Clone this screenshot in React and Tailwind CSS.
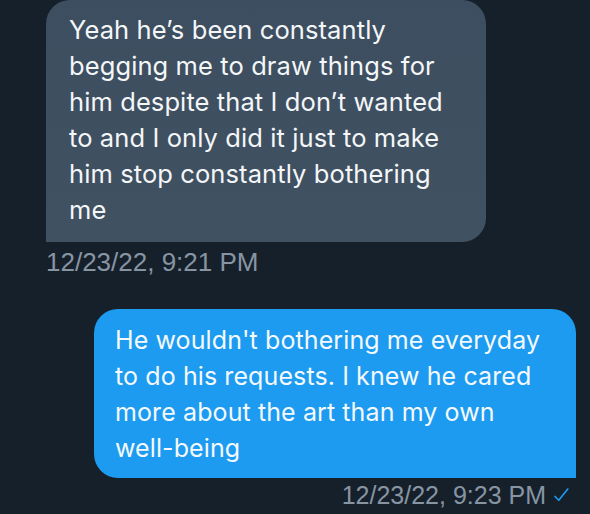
import React from 'react';

const bubbleFont = { fontFamily: 'Inter, "Open Sans", sans-serif' };

function Check() {
  return (
    <svg width="18" height="18" viewBox="0 0 24 24" fill="none" className="text-[#1d9bf0]">
      <path d="M4 14l5 5L21 4" stroke="currentColor" strokeWidth="2.2" strokeLinecap="round" strokeLinejoin="round" />
    </svg>
  );
}

export default function App() {
  return (
    <div className="w-[590px] h-[514px] overflow-hidden bg-[#16202b] flex flex-col">
      {/* incoming */}
      <div className="ml-[46px] w-[440px] rounded-[24px] rounded-bl-none bg-gradient-to-b from-[#3c4e5f] to-[#405162] pl-[23px] pt-[12px] pb-[14px] text-[25.5px] leading-[36px] tracking-[0.1px] text-[#f4f6f8] whitespace-nowrap" style={bubbleFont}>
        Yeah he’s been constantly<br />
        begging me to draw things for<br />
        him despite that I don’t wanted<br />
        to and I only did it just to make<br />
        him stop constantly bothering<br />
        me
      </div>
      <div className="ml-[46px] mt-[5px] text-[26px] leading-[30px] text-[#8795a3] font-['Liberation_Sans',Arial,sans-serif]">
        12/23/22, 9:21 PM
      </div>

      {/* outgoing */}
      <div className="mt-[32px] ml-[94px] w-[482px] rounded-[24px] rounded-br-none bg-[#1d9bf0] pl-[21px] pt-[13px] pb-[12px] text-[25px] leading-[36px] tracking-[0.1px] text-[#f4f9fd] whitespace-nowrap" style={bubbleFont}>
        He wouldn't bothering me everyday<br />
        to do his requests. I knew he cared<br />
        more about the art than my own<br />
        well-being
      </div>
      <div className="mt-[2px] mr-[20px] flex items-center justify-end gap-[6px] text-[25px] leading-[30px] text-[#8795a3] font-['Liberation_Sans',Arial,sans-serif]">
        <span>12/23/22, 9:23 PM</span>
        <Check />
      </div>
    </div>
  );
}
